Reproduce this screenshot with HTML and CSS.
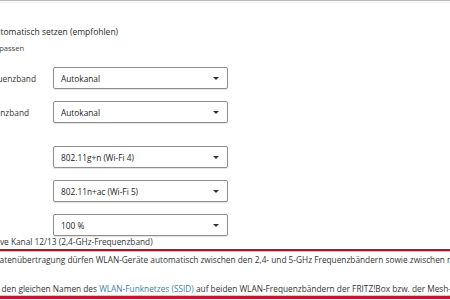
FILE: index.html
```html
<!DOCTYPE html>
<html lang="de">
<head>
<meta charset="utf-8">
<title>WLAN-Kanal</title>
<link rel="stylesheet" href="styles.css">
</head>
<body>
<div class="topbar"></div>
<div class="options">
  <div class="option primary">Kanaleinstellungen automatisch setzen (empfohlen)</div>
  <div class="option secondary">Kanaleinstellungen anpassen</div>
</div>
<div class="form">
  <div class="row">
    <span class="label">2,4-GHz-Frequenzband</span>
    <div class="select"><span class="value">Autokanal</span><span class="arrow"></span></div>
  </div>
  <div class="row">
    <span class="label">5-GHz-Frequenzband</span>
    <div class="select"><span class="value">Autokanal</span><span class="arrow"></span></div>
  </div>
  <div class="row group-start">
    <span class="label"></span>
    <div class="select"><span class="value">802.11g+n (Wi-Fi 4)</span><span class="arrow"></span></div>
  </div>
  <div class="row">
    <span class="label"></span>
    <div class="select"><span class="value">802.11n+ac (Wi-Fi 5)</span><span class="arrow"></span></div>
  </div>
  <div class="row">
    <span class="label"></span>
    <div class="select"><span class="value">100 %</span><span class="arrow"></span></div>
  </div>
</div>
<div class="check">Autokanal inklusive Kanal 12/13 (2,4-GHz-Frequenzband)</div>
<div class="notice">
  <p class="first">Bei der Datenübertragung dürfen WLAN-Geräte automatisch zwischen den 2,4- und 5-GHz Frequenzbändern sowie zwischen mehreren Mesh-Repeatern wechseln.</p>
  <p class="second">Nutzen Sie den gleichen Namen des <a href="#">WLAN-Funknetzes (SSID)</a> auf beiden WLAN-Frequenzbändern der FRITZ!Box bzw. der Mesh-Repeater.</p>
</div>
</body>
</html>
```
FILE: styles.css
```css
* { box-sizing: border-box; margin: 0; padding: 0; }
html, body { width: 450px; height: 300px; overflow: hidden; background: #fff; }
body {
  font-family: "Open Sans", "Noto Sans", sans-serif;
  font-size: 8.3px;
  color: #333;
  white-space: nowrap;
}
.topbar { height: 3px; border-top: 1px solid #b8b8b8; border-bottom: 1px solid #efefef; }
.options { padding-top: 20px; }
.option { height: 17px; line-height: 17px; }
.option.primary { font-size: 8.5px; color: #2a2a2a; margin-left: -87px; }
.option.secondary { font-size: 7.6px; color: #444; margin-left: -79px; }
.form { margin-top: 10px; margin-left: -53px; }
.row { display: flex; align-items: center; height: 22px; margin-bottom: 12px; }
.row.group-start { margin-top: 23px; }
.row:last-child { margin-bottom: 0; }
.label { width: 106px; flex: none; }
.select {
  width: 175px; height: 22px; flex: none;
  border: 1px solid #8f8f8f; border-radius: 2px;
  box-shadow: 0 1px 1px rgba(0,0,0,0.12);
  display: flex; align-items: center; justify-content: space-between;
  padding: 0 8px 0 7px; color: #222;
}
.arrow {
  width: 0; height: 0;
  border-left: 3px solid transparent; border-right: 3px solid transparent;
  border-top: 3px solid #333;
}
.check { height: 12px; line-height: 12px; margin-left: -66px; }
.notice {
  margin-left: -30px; width: 520px; margin-top: 1px;
  border-top: 2px solid #a11c2f; border-bottom: 3px solid #c2172f;
  box-shadow: inset 0 1px 0 #e9b8be, inset 0 -1px 0 #ebbcc2;
  padding: 3px 0 1px;
}
.notice p { height: 12px; line-height: 12px; }
.notice .first { margin-left: -6px; }
.notice .second { margin-top: 17px; margin-left: -12px; }
.notice a { color: #3d7fa6; text-decoration: none; }
```
